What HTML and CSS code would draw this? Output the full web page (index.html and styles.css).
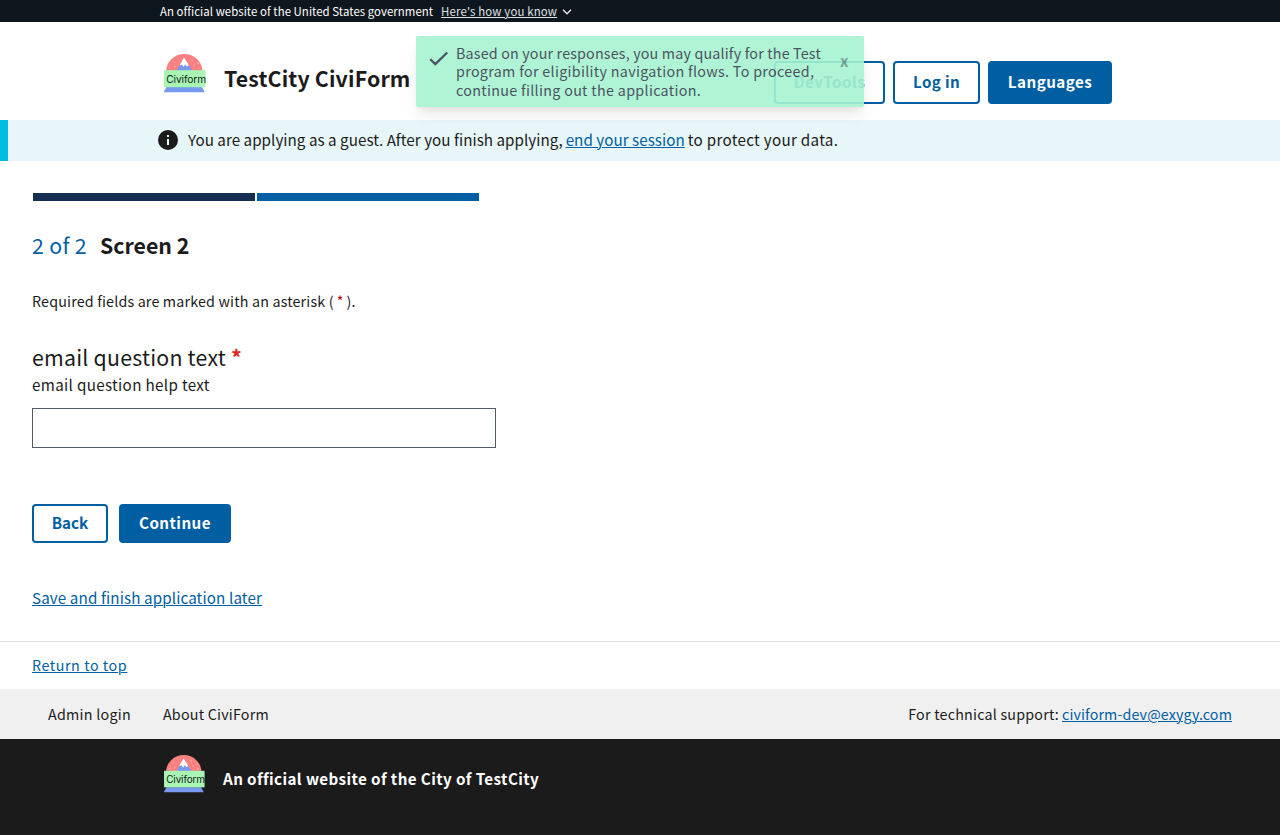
FILE: index.html
```html
<!DOCTYPE html>
<html lang="en">
<head>
<meta charset="utf-8">
<title>Screen 2</title>
<link rel="stylesheet" href="styles.css">
</head>
<body>
<svg class="defs" aria-hidden="true">
  <symbol id="logo" viewBox="0 0 42 39">
    <path d="M2 18A18.250 18 0 0 1 38.500 18Z" fill="#fb8080"/>
    <path d="M12.500 17 20 3.500 28.500 17Z" fill="#7698ef"/>
    <path d="M15.500 11.500 20 3.500 24.800 11 23 12.500 21.300 10.500 19.500 13 18 10.500Z" fill="#fff"/>
    <g fill="#fff" opacity=".65"><circle cx="5.500" cy="14" r=".6"/><circle cx="10" cy="8" r=".6"/><circle cx="11" cy="12.500" r=".6"/><circle cx="28" cy="6" r=".6"/><circle cx="30" cy="11" r=".6"/><circle cx="34" cy="9.500" r=".6"/><circle cx="35" cy="14" r=".6"/></g>
    <path d="M2.500 33H38L40.800 38.300H-.4Z" fill="#7698ef"/>
    <rect x="0" y="16.200" width="41.600" height="17" fill="#a9f5b4"/>
    <text x="2.200" y="28.700" class="logo-word">Civiform</text>
  </symbol>
</svg>
<div class="gov"><span class="gov-text">An official website of the United States government</span><a class="gov-link">Here's how you know</a><svg width="10" height="6" viewBox="0 0 10 6"><path d="M1 .8 5 4.800 9 .8" fill="none" stroke="#dfe1e2" stroke-width="1.500"/></svg></div>
<header class="header">
  <svg class="logo"><use href="#logo"/></svg>
  <span class="title">TestCity CiviForm</span>
  <nav class="nav">
    <button class="btn dev">DevTools</button>
    <button class="btn login">Log in</button>
    <button class="btn solid lang">Languages</button>
  </nav>
</header>
<div class="guest">
  <svg width="24" height="24" viewBox="0 0 24 24"><path fill="#1b1b1b" d="M12 2a10 10 0 1 0 0 20 10 10 0 0 0 0-20Zm1 15h-2v-6h2v6Zm0-8h-2V7h2v2Z"/></svg>
  <p><span class="guest-intro">You are applying as a guest. After you finish applying,</span><a>end your session</a><span class="guest-end">to protect your data.</span></p>
</div>
<main class="main">
  <div class="steps"><i class="done"></i><i class="current"></i></div>
  <h1 class="heading"><span class="count">2 of 2</span><span>Screen 2</span></h1>
  <p class="required"><span>Required fields are marked with an asterisk (</span><b class="star">*</b><span>).</span></p>
  <label class="question" for="email"><span>email question text</span><b>*</b></label>
  <p class="help">email question help text</p>
  <input class="field" id="email" type="email">
  <div class="actions">
    <button class="btn back">Back</button>
    <button class="btn solid cont">Continue</button>
  </div>
  <a class="save">Save and finish application later</a>
</main>
<div class="return"><a>Return to top</a></div>
<div class="links"><span class="admin">Admin login</span><span class="about">About CiviForm</span><span class="support"><span class="about">For technical support:</span><a class="mail">civiform-dev@exygy.com</a></span></div>
<footer class="footer"><svg class="logo"><use href="#logo"/></svg><span>An official website of the City of TestCity</span></footer>
<div class="toast">
  <svg width="24" height="24" viewBox="0 0 24 24"><path fill="#374151" d="M8.300 15.600 4.100 11.400 2.500 13 8.300 18.800 21 6.300 19.400 4.700Z"/></svg>
  <p><span class="first">Based on your responses, you may qualify for the Test</span><br>program for eligibility navigation flows. To proceed,<br>continue filling out the application.</p>
  <span class="close">x</span>
</div>
</body>
</html>
```
FILE: styles.css
```css
* { box-sizing: border-box; }
body { margin: 0; font: 15.2px/20px "Noto Sans CJK SC", "Noto Sans", sans-serif; color: #1b1b1b; background: #fff; white-space: nowrap; }
p, h1 { margin: 0; }
a { color: #005ea2; text-decoration: underline; text-decoration-thickness: 1px; text-underline-offset: 1px; }
.defs { position: absolute; width: 0; height: 0; }
.logo-word { font: 10.200px Inter, Roboto, sans-serif; letter-spacing: -.1px; fill: #10231a; }
.logo { width: 42px; height: 39px; flex: none; overflow: visible; }
.gov { height: 22px; background: #0f171e; color: #fff; font-size: 11.400px; line-height: 22px; padding-left: 160px; display: flex; align-items: center; }
.gov-text { letter-spacing: .055px; }
.gov-link { color: #dfe1e2; margin-left: 8px; letter-spacing: .16px; }
.gov svg { margin: 2px 0 0 5px; }
.header { height: 98px; padding: 0 168px 0 164px; display: flex; align-items: flex-start; }
.header .logo { margin-top: 32px; }
.title { margin: 42px 0 0 18px; font-size: 21.300px; line-height: 28px; font-weight: 700; letter-spacing: .16px; }
.nav { margin: 39px 0 0 auto; display: flex; gap: 8px; }
.btn { font: 700 15.200px/20px "Noto Sans CJK SC", sans-serif; letter-spacing: .45px; color: #005ea2; border: 2px solid #005ea2; border-radius: 4px; background: transparent; padding: 0 0 3px; height: 43px; }
.solid { background: #005ea2; color: #fff; }
.dev { width: 111px; letter-spacing: .5px; }
.login { width: 87px; letter-spacing: .35px; }
.lang { width: 124px; }
.guest { height: 41px; border-left: 8px solid #00bde3; background: #e7f6f8; padding: 0 0 1px 148px; display: flex; align-items: center; letter-spacing: .035px; }
.guest p { margin: -2px 0 0 8px; display: flex; gap: 3px; }
.guest-end { letter-spacing: .3px; }
.main { padding: 32px 32px 0; height: 480px; }
.steps { display: flex; gap: 2px; margin-left: 1px; }
.steps i { width: 222px; height: 8px; }
.done { background: #162e51; }
.current { background: #005ea2; }
.heading { margin-top: 29px; font-size: 21.300px; line-height: 30px; display: flex; gap: 13px; }
.count { font-weight: 400; color: #005ea2; letter-spacing: .33px; }
.required { margin-top: 30px; font-size: 14.300px; line-height: 22px; display: flex; gap: 3px; letter-spacing: .165px; }
.star { font-weight: 400; color: #b50909; }
.question { margin-top: 30px; font-size: 21.300px; line-height: 30px; display: flex; gap: 5px; letter-spacing: .23px; }
.question b { color: #dc2626; }
.help { margin-top: 1px; line-height: 22px; letter-spacing: .33px; }
.field { display: block; margin-top: 13px; width: 464px; height: 40px; border: 1px solid #565c65; border-radius: 0; background: #fff; }
.actions { margin-top: 56px; display: flex; gap: 11px; }
.actions .btn { height: 39px; }
.back { width: 76px; letter-spacing: 0; }
.cont { width: 112px; }
.save { display: block; margin-top: 43px; line-height: 22px; letter-spacing: .115px; width: max-content; }
.return { height: 48px; border-top: 1px solid #dfe1e2; padding: 12px 32px; font-size: 14.300px; line-height: 22px; letter-spacing: .56px; }
.links { height: 50px; background: #f0f0f0; padding: 0 48px; display: flex; align-items: center; gap: 32px; font-size: 14.300px; }
.admin { letter-spacing: .26px; }
.about { letter-spacing: .21px; }
.mail { letter-spacing: .11px; }
.support { margin-left: auto; display: flex; gap: 3px; }
.footer { height: 96px; background: #1b1b1b; color: #fff; padding: 16px 0 0 164px; display: flex; font-weight: 700; letter-spacing: .4px; }
.footer .logo { width: 41px; height: 38px; }
.footer span { margin: 13px 0 0 18px; }
.toast { position: absolute; left: 416px; top: 36px; width: 448px; height: 71px; background: #a7f3d0; opacity: .9; border-radius: 2px; box-shadow: 0 10px 15px -3px rgba(0,0,0,.1), 0 4px 6px -2px rgba(0,0,0,.05); color: #374151; padding: 8px 10px; display: flex; }
.toast svg { margin: 3px 0 0 1px; flex: none; }
.toast p { margin-left: 5px; font-size: 14.300px; line-height: 18.400px; width: 384px; flex: none; letter-spacing: .315px; }
.first { letter-spacing: .17px; }
.close { font-weight: 700; opacity: .5; line-height: 33px; }
```
